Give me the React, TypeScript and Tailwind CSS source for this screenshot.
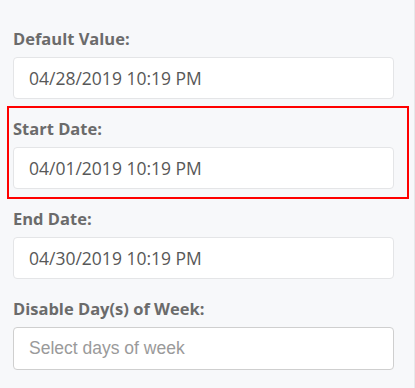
type Field = {
  label: string;
  value?: string;
  placeholder?: string;
  highlight?: boolean;
};

const fields: Field[] = [
  { label: "Default Value:", value: "04/28/2019 10:19 PM" },
  { label: "Start Date:", value: "04/01/2019 10:19 PM", highlight: true },
  { label: "End Date:", value: "04/30/2019 10:19 PM" },
  { label: "Disable Day(s) of Week:", placeholder: "Select days of week" },
];

function FieldGroup({ field }: { field: Field }) {
  return (
    <div className="relative">
      {field.highlight && (
        <span className="pointer-events-none absolute -top-[12px] -bottom-[10px] -left-[6px] -right-[15px] border-2 border-[#ff0000]" />
      )}
      <p className="mb-[7px] text-[16.5px] leading-[22px] font-bold text-[#6b6b6b] [font-family:'Open_Sans',sans-serif]">
        {field.label}
      </p>
      {field.value ? (
        <div className="flex h-[42px] items-center rounded-[4px] border border-[#e4e5e7] bg-white px-[15px] text-[17.5px] text-[#585858] [font-family:'Open_Sans',sans-serif]">
          {field.value}
        </div>
      ) : (
        <div className="flex h-[43px] items-center rounded-[4px] border border-[#cfcfcf] bg-white px-[15px] text-[17.5px] text-[#9a9a9a] [font-family:'Liberation_Sans',Arial,sans-serif]">
          {field.placeholder}
        </div>
      )}
    </div>
  );
}

export default function App() {
  return (
    <div className="h-[388px] w-[415px] overflow-hidden border-r border-[#e7e8ea] bg-[#f7f8fa]">
      <div className="flex w-[381px] flex-col gap-[19px] pl-[13px] pt-[28px] box-content">
        {fields.map((f) => (
          <FieldGroup key={f.label} field={f} />
        ))}
      </div>
    </div>
  );
}
